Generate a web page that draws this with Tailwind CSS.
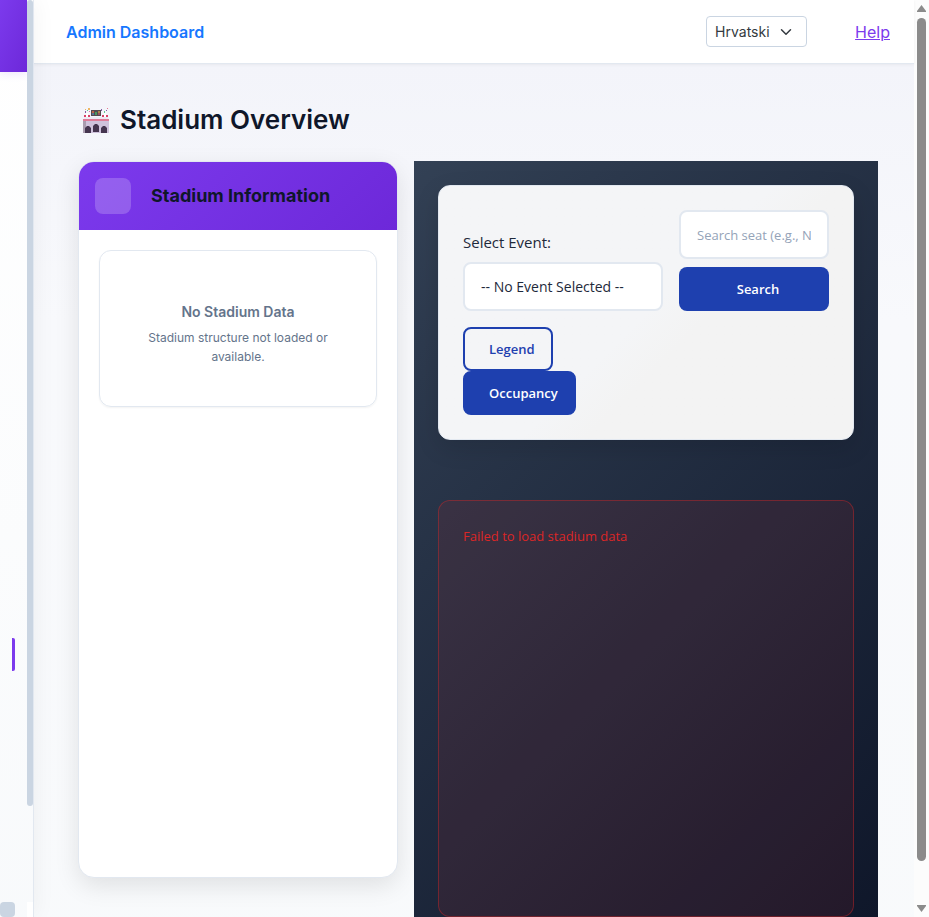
<!DOCTYPE html>
<html lang="en">
<head>
<meta charset="utf-8">
<meta name="viewport" content="width=device-width, initial-scale=1">
<title>Admin Dashboard</title>
<script src="https://cdn.jsdelivr.net/npm/@tailwindcss/browser@4"></script>
</head>
<body class="flex h-screen overflow-hidden bg-slate-50 font-['Inter',sans-serif] text-[#0f172a]">

<!-- Collapsed sidebar -->
<aside class="relative z-10 flex w-[34px] shrink-0 border-r border-slate-200 bg-linear-to-b from-white to-slate-50 shadow-[4px_0_20px_rgba(0,0,0,0.04)]">
  <div class="flex flex-1 flex-col">
    <div class="h-[72px] shrink-0 bg-linear-to-br from-[#7c3aed] to-[#6d28d9] shadow-[0_2px_8px_rgba(124,58,237,0.12)]"></div>
    <div class="flex flex-1 flex-col justify-end pb-[246px] pl-3">
      <div class="h-[33px] w-[3px] rounded-r-xs bg-[#7c3aed]"></div>
    </div>
  </div>
  <div class="w-[6px] pb-[111px]"><div class="h-full rounded-full bg-slate-300"></div></div>
  <div class="absolute bottom-0 left-0 size-[15px] rounded-sm bg-slate-300"></div>
  <div class="absolute right-0 bottom-0 h-[15px] w-[6px] bg-white"></div>
</aside>

<div class="flex min-w-0 flex-1 flex-col">
  <header class="relative flex h-16 shrink-0 items-center border-b border-slate-200 bg-white pr-6 pl-8 shadow-[0_1px_3px_rgba(0,0,0,0.05)]">
    <a href="#" class="text-base font-semibold text-[#1677ff]">Admin Dashboard</a>
    <div class="ml-auto flex items-center gap-12">
      <div class="relative">
        <select aria-label="Language" class="block h-[31px] w-[101px] appearance-none rounded-sm border border-slate-300 bg-white pl-2 text-sm text-[#343a40]">
          <option>Hrvatski</option>
          <option>English</option>
        </select>
        <svg class="pointer-events-none absolute top-[10px] right-[15px] size-3" viewBox="0 0 16 16" fill="none" stroke="#343a40" stroke-width="2" stroke-linecap="round" stroke-linejoin="round"><path d="m2 5 6 6 6-6"/></svg>
      </div>
      <a href="#" class="text-base text-[#7c3aed] underline">Help</a>
    </div>
  </header>

  <main class="flex min-h-0 flex-1 flex-col bg-linear-to-b from-[#f3f4fa] via-[#f8f9fc] via-30% to-slate-50 pr-9 pl-11">
    <h1 class="flex h-[97px] shrink-0 items-center gap-[11px] pt-[14px] pl-[5px] text-[26px] font-semibold">
      <svg class="h-[26px] w-[26px]" viewBox="0 0 26 26" aria-hidden="true">
        <path d="M1 10h24v3H1z" fill="#eeeaf4"/>
        <path d="M0 13h26v13H0z" fill="#cfc2dc"/>
        <path d="M0 13h3v13H0z" fill="#a99caf"/>
        <path d="M0 12h26v2H0z" fill="#df7c99"/>
        <path d="M2 26v-5l2-2h2l2 2v5zM10 25v-6l2-2h2l2 2v6zM18 26v-5l2-2h2l2 2v5z" fill="#45354f"/>
        <path d="M8 3h10v6H8z" fill="#554b50"/>
        <path d="M9 4h2v2H9z" fill="#bf6248"/><path d="M12 5h2v3h-2z" fill="#48985f"/><path d="M15 4h2v2h-2z" fill="#ad874b"/><path d="M9 6h2v2H9z" fill="#5b7298"/><path d="M15 6h2v2h-2z" fill="#9a5460"/>
        <path d="M1 8h2v2H1zM5 8h2v2H5zM19 8h2v2h-2zM23 8h2v2h-2z" fill="#d94268"/>
        <path d="M3 6h2v4H3zM21 6h2v4h-2z" fill="#fff"/>
        <path d="M2 4h1v2H2zM18 2h1v2h-1zM23 3h1v1h-1z" fill="#8160a1"/>
        <path d="M5 1h2v2H5zM2 2h1v1H2z" fill="#edb765"/>
        <path d="M21 4h1v2h-1zM4 3h1v1H4z" fill="#65c593"/><path d="M24 1h1v1h-1zM6 4h1v1H6z" fill="#e87792"/>
      </svg>
      Stadium Overview
    </h1>

    <div class="grid min-h-0 flex-1 grid-cols-[20fr_29fr] gap-4">
      <section class="mb-[39px] overflow-hidden rounded-2xl border border-slate-200 bg-white shadow-[0_8px_24px_rgba(0,0,0,0.10)]">
        <div class="flex items-center gap-5 bg-linear-135 from-[#7c3aed] to-[#6d28d9] p-4">
          <div class="size-9 rounded-lg bg-white/20"></div>
          <h2 class="text-lg font-bold">Stadium Information</h2>
        </div>
        <div class="p-5">
          <div class="rounded-xl border border-slate-200 px-10 pt-[52px] pb-10 text-center shadow-xs">
            <h3 class="text-sm leading-[18px] font-semibold text-[#64748b]">No Stadium Data</h3>
            <p class="mt-[7px] text-xs leading-[19px] text-[#64748b]">Stadium structure not loaded or available.</p>
          </div>
        </div>
      </section>

      <section class="flex flex-col bg-linear-135 from-[#334155] to-[#0f172a] px-6 pt-6 font-['Open_Sans',sans-serif]">
        <form class="grid grid-cols-[4fr_3fr] items-end gap-4 rounded-xl border border-slate-200 bg-linear-135 from-[#f4f5f7] from-50% to-[#f3f3f3] to-60% p-6 shadow-[0_8px_24px_rgba(0,0,0,0.12)]">
          <div>
            <label for="event" class="mb-2 block text-[15px] leading-6 text-[#1e293b]">Select Event:</label>
            <select id="event" class="block h-[49px] w-full appearance-none rounded-lg border-2 border-slate-200 bg-white px-4 text-sm text-[#1e293b]">
              <option>-- No Event Selected --</option>
            </select>
          </div>
          <div class="flex flex-col gap-2">
            <input type="text" aria-label="Search seat" placeholder="Search seat (e.g., N1-A-5)" class="h-[49px] w-full rounded-lg border-2 border-slate-200 bg-white px-4 text-[13px] placeholder:text-[#94a3b8]">
            <button type="button" class="h-11 rounded-lg bg-[#1e40af] pt-[2px] pl-2 text-[13px] font-semibold text-white">Search</button>
          </div>
          <div class="flex flex-col items-start">
            <button type="button" class="h-11 rounded-lg border-2 border-[#1e40af] pt-[2px] pr-4 pl-6 text-[13px] font-semibold text-[#1e40af]">Legend</button>
            <button type="button" class="h-11 rounded-lg border-2 border-[#1e40af] bg-[#1e40af] pt-[2px] pr-4 pl-6 text-[13px] font-semibold text-white">Occupancy</button>
          </div>
        </form>
        <div role="alert" class="mt-15 flex-1 rounded-xl border border-[#dc2626]/40 bg-[#dc2626]/10 p-6 text-[13px] leading-[22px] text-[#dc2626]">Failed to load stadium data</div>
      </section>
    </div>
  </main>
</div>

<!-- Page scroll track -->
<div class="flex w-[15px] shrink-0 flex-col items-center bg-[#fcfcfc] py-[5px]" aria-hidden="true">
  <svg class="h-[7px] w-[9px] shrink-0" viewBox="0 0 9 7" fill="#8b8b8b"><path d="M4.500 0 9 6v1H0V6z"/></svg>
  <div class="mt-[6px] mb-11 w-[9px] flex-1 rounded-full bg-[#8b8b8b]"></div>
  <svg class="h-[7px] w-[9px] shrink-0" viewBox="0 0 9 7" fill="#8b8b8b"><path d="M4.500 7 9 1V0H0v1z"/></svg>
</div>
</body>
</html>
